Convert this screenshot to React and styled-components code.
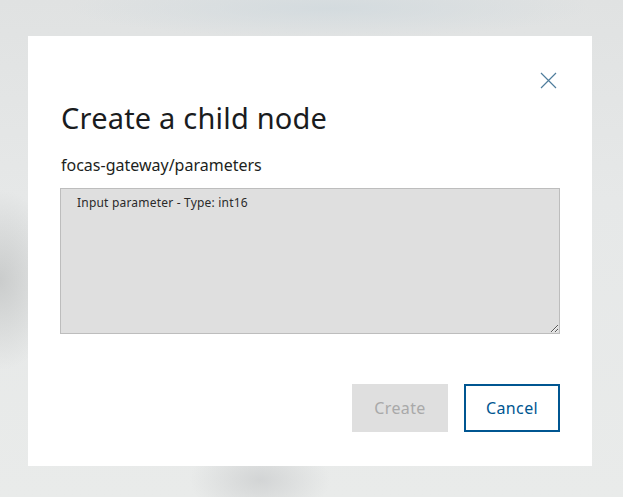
import React, { useState } from 'react'
import styled, { createGlobalStyle } from 'styled-components'

const GlobalStyle = createGlobalStyle`
    html, body {
        margin: 0;
        padding: 0;
    }
    body {
        font-family: "Noto Sans", "Open Sans", sans-serif;
        color: #1d1f21;
    }
`

function App() {
    const [value, setValue] = useState('')

    return (
        <Backdrop>
            <GlobalStyle />
            <Dialog role="dialog" aria-labelledby="dlg-title">
                <Header>
                    <CloseButton aria-label="Close">
                        <svg width="17" height="17" viewBox="0 0 17 17">
                            <path d="M1 1 L16 16 M16 1 L1 16" stroke="#4f7d9c" strokeWidth="1.2" fill="none" />
                        </svg>
                    </CloseButton>
                </Header>
                <Title id="dlg-title">Create a child node</Title>
                <Path>focas-gateway/parameters</Path>
                <TextArea
                    placeholder="Input parameter - Type: int16"
                    value={value}
                    onChange={(e) => setValue(e.target.value)}
                />
                <Actions>
                    <Button disabled>Create</Button>
                    <Button $outline>Cancel</Button>
                </Actions>
            </Dialog>
        </Backdrop>
    )
}

const Backdrop = styled.div`
    width: 623px;
    height: 497px;
    box-sizing: border-box;
    padding: 36px 31px 31px 28px;
    background:
        radial-gradient(ellipse 60px 90px at 0px 280px, rgba(190, 192, 192, 0.7), transparent),
        radial-gradient(ellipse 70px 40px at 260px 480px, rgba(205, 207, 208, 0.8), transparent),
        radial-gradient(ellipse 260px 30px at 330px 8px, rgba(210, 218, 222, 0.9), transparent),
        linear-gradient(180deg, #e0e2e2 0%, #e6e8e8 40%, #e9ebea 100%);
    overflow: hidden;
`

const Dialog = styled.div`
    width: 564px;
    height: 430px;
    box-sizing: border-box;
    background: #fff;
    padding: 36px 32px 0 33px;
    display: flex;
    flex-direction: column;
`

const Header = styled.div`
    display: flex;
    justify-content: flex-end;
    padding-right: 3px;
`

const CloseButton = styled.button`
    background: none;
    border: none;
    padding: 0;
    width: 17px;
    height: 17px;
    cursor: pointer;
    display: flex;
`

const Title = styled.h2`
    margin: 11px 0 0;
    font-size: 29px;
    font-weight: 400;
    line-height: 36px;
    color: #1a1c1e;
    letter-spacing: 0.2px;
`

const Path = styled.div`
    margin-top: 18px;
    font-size: 16px;
    line-height: 23px;
    color: #1d1f21;
`

const TextArea = styled.textarea`
    margin: 11px 0 0 -1px;
    width: 500px;
    height: 146px;
    box-sizing: border-box;
    background: #dfdfdf;
    border: 1px solid #bdbdbd;
    border-radius: 0;
    padding: 5px 16px;
    font-family: "Noto Sans", sans-serif;
    font-size: 12px;
    letter-spacing: 0.2px;
    color: #333;
    resize: vertical;
    outline: none;

    &::placeholder {
        color: #2a2a2a;
        opacity: 1;
    }
`

const Actions = styled.div`
    margin-top: 50px;
    display: flex;
    justify-content: flex-end;
    gap: 16px;
`

const Button = styled.button`
    width: 96px;
    height: 48px;
    box-sizing: border-box;
    font-family: "Noto Sans", sans-serif;
    font-size: 16px;
    letter-spacing: 0.4px;
    border-radius: 0;
    cursor: pointer;
    background: ${(p) => (p.$outline ? '#fff' : '#dfdfdf')};
    color: ${(p) => (p.$outline ? '#005691' : '#a9a9a9')};
    border: ${(p) => (p.$outline ? '2px solid #005691' : 'none')};

    &:disabled {
        cursor: default;
    }
`

export default App
